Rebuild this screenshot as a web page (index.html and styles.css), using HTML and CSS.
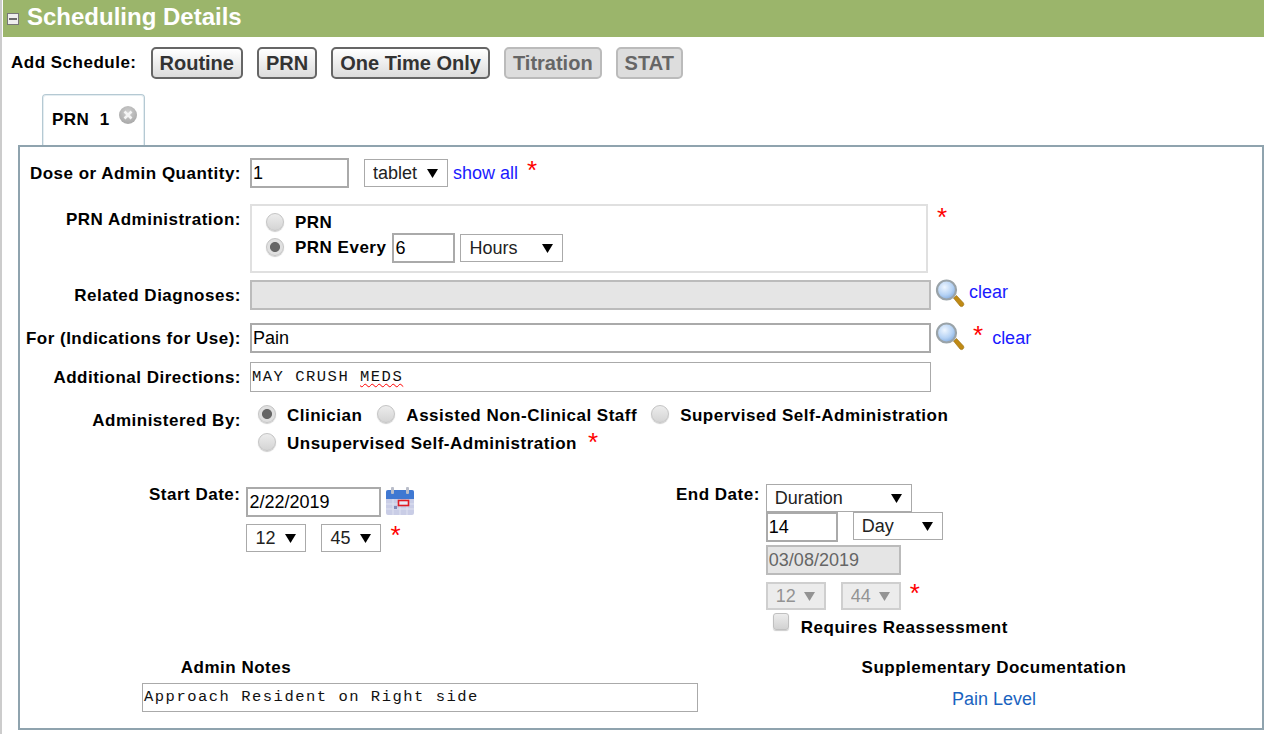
FILE: index.html
```html
<!DOCTYPE html>
<html lang="en">
<head>
<meta charset="utf-8">
<title>Scheduling Details</title>
<link rel="stylesheet" href="styles.css">
</head>
<body>
<svg class="defs" width="0" height="0" aria-hidden="true">
  <defs>
    <radialGradient id="lens" cx="40%" cy="35%" r="70%">
      <stop offset="0" stop-color="#eef6ff"/><stop offset="0.6" stop-color="#b5d2f4"/><stop offset="1" stop-color="#7fa8dc"/>
    </radialGradient>
    <radialGradient id="closeg" cx="50%" cy="35%" r="65%">
      <stop offset="0" stop-color="#d0d0d0"/><stop offset="1" stop-color="#a8a8a8"/>
    </radialGradient>
    <symbol id="mag" viewBox="0 0 30 30">
      <path d="M18.5 19 L21.5 16.5 L28.5 24 Q29.5 25.5 28 27 Q26.5 28.2 25 27 Z" fill="#c08a14" stroke="#94690c" stroke-width=".6"/>
      <circle cx="11.5" cy="11" r="9.5" fill="url(#lens)" stroke="#9aa3a8" stroke-width="2.2"/>
    </symbol>
  </defs>
</svg>
<main class="page">
  <header class="section-head">
    <span class="collapse" aria-hidden="true"></span>
    <h1>Scheduling Details</h1>
  </header>
  <div class="add-row">
    <span class="add-label">Add Schedule:</span>
    <button class="btn">Routine</button>
    <button class="btn">PRN</button>
    <button class="btn">One Time Only</button>
    <button class="btn" disabled>Titration</button>
    <button class="btn" disabled>STAT</button>
  </div>
  <div class="tabs">
    <div class="tab">
      <span class="tab-text">PRN&nbsp; 1</span>
      <svg class="tab-close" width="20" height="20" viewBox="0 0 20 20" aria-hidden="true">
        <circle cx="10" cy="10" r="9" fill="url(#closeg)"/>
        <path d="M6.5 6.5 13.5 13.5 M13.5 6.5 6.5 13.5" stroke="#f4f4f4" stroke-width="2.6"/>
      </svg>
    </div>
  </div>
  <section class="panel">
    <div class="row row-dose">
      <label class="lbl">Dose or Admin Quantity:</label>
      <input class="txt w-qty" value="1">
      <select class="sel w-tablet"><option>tablet</option></select>
      <a class="link link-showall" href="#">show all</a>
      <span class="req req-dose">*</span>
    </div>
    <div class="row row-prn">
      <label class="lbl lbl-prn">PRN Administration:</label>
      <div class="prn-box">
        <div class="prn-line"><input type="radio" name="prn" class="radio"><b class="opt">PRN</b></div>
        <div class="prn-line prn-line2"><input type="radio" name="prn" class="radio" checked><b class="opt">PRN Every</b>
          <input class="txt w-every" value="6">
          <select class="sel w-hours"><option>Hours</option></select>
        </div>
      </div>
      <span class="req req-prn">*</span>
    </div>
    <div class="row row-rel">
      <label class="lbl">Related Diagnoses:</label>
      <input class="txt w-wide is-off" disabled>
      <svg class="mag" width="30" height="30" aria-hidden="true"><use href="#mag"/></svg>
      <a class="link link-clear1" href="#">clear</a>
    </div>
    <div class="row row-for">
      <label class="lbl">For (Indications for Use):</label>
      <input class="txt w-wide" value="Pain">
      <svg class="mag" width="30" height="30" aria-hidden="true"><use href="#mag"/></svg>
      <span class="req req-for">*</span>
      <a class="link link-clear2" href="#">clear</a>
    </div>
    <div class="row row-add">
      <label class="lbl">Additional Directions:</label>
      <div class="mono w-wide2">MAY CRUSH <span class="spell">MEDS</span></div>
    </div>
    <div class="row row-by">
      <label class="lbl lbl-by">Administered By:</label>
      <div class="by-opts">
        <div class="by-line">
          <input type="radio" name="by" class="radio" checked><b class="opt o1">Clinician</b>
          <input type="radio" name="by" class="radio"><b class="opt o2">Assisted Non-Clinical Staff</b>
          <input type="radio" name="by" class="radio"><b class="opt">Supervised Self-Administration</b>
        </div>
        <div class="by-line by-line2">
          <input type="radio" name="by" class="radio"><b class="opt">Unsupervised Self-Administration</b>
          <span class="req req-by">*</span>
        </div>
      </div>
    </div>
    <div class="dates">
      <div class="date-col start-col">
        <label class="lbl lbl-date lbl-start">Start Date:</label>
        <div class="date-body start-body">
          <div class="line">
            <input class="txt w-date" value="2/22/2019">
            <svg class="cal" width="30" height="30" viewBox="0 0 30 30" aria-hidden="true">
              <rect x="1" y="4" width="28" height="25" rx="2" fill="#c9cde6"/>
              <path d="M1 13V6a2 2 0 0 1 2-2h24a2 2 0 0 1 2 2v7z" fill="#3f78d2"/>
              <rect x="6" y="1" width="3" height="7" rx="1" fill="#b9bdc9"/>
              <rect x="21" y="1" width="3" height="7" rx="1" fill="#b9bdc9"/>
              <path d="M1 18H29M1 23H29M8 13V29M15 13V29M22 13V29" stroke="#dfe2f1" stroke-width="1"/>
              <rect x="13.5" y="14.5" width="10" height="5" fill="#e8e8f5" stroke="#e01b24" stroke-width="1.6"/>
              <rect x="9" y="20" width="3" height="3" fill="#8088b8"/>
            </svg>
          </div>
          <div class="line line-time">
            <select class="sel w-time"><option>12</option></select>
            <select class="sel w-time"><option>45</option></select>
            <span class="req req-start">*</span>
          </div>
        </div>
      </div>
      <div class="date-col end-col">
        <label class="lbl lbl-date lbl-end">End Date:</label>
        <div class="date-body">
          <select class="sel w-dur"><option>Duration</option></select>
          <div class="line line-dur">
            <input class="txt w-num" value="14">
            <select class="sel w-day"><option>Day</option></select>
          </div>
          <input class="txt w-date2 is-off" value="03/08/2019" disabled>
          <div class="line line-time2">
            <select class="sel w-time is-off" disabled><option>12</option></select>
            <select class="sel w-time is-off" disabled><option>44</option></select>
            <span class="req req-end">*</span>
          </div>
          <div class="line line-reassess">
            <input type="checkbox" class="check"><b class="opt">Requires Reassessment</b>
          </div>
        </div>
      </div>
    </div>
    <div class="notes">
      <div class="notes-left">
        <b class="notes-title">Admin Notes</b>
        <div class="mono w-notes">Approach Resident on Right side</div>
      </div>
      <div class="notes-right">
        <b class="notes-title">Supplementary Documentation</b>
        <a class="pain" href="#">Pain Level</a>
      </div>
    </div>
  </section>
</main>
</body>
</html>
```
FILE: styles.css
```css
* { box-sizing: border-box; }
html, body { margin: 0; height: 100%; }
body {
  font-family: "Liberation Sans", Arial, sans-serif;
  font-size: 17px;
  color: #000;
  background: #fff;
  overflow: hidden;
}
.defs { position: absolute; }
.page { height: 734px; border-left: 2px solid #ccc; padding-left: 1px; }

.section-head {
  height: 37px;
  background: #9bb56b;
  display: flex;
  align-items: center;
  padding-left: 4px;
}
.section-head h1 {
  margin: 0 0 3px 8px;
  font-size: 24px;
  font-weight: bold;
  color: #fff;
}
.collapse {
  width: 12px; height: 12px;
  margin-top: 1px;
  border: 1px solid #777;
  background: linear-gradient(#6a6a6a, #6a6a6a) center / 8px 2px no-repeat, #eee;
}

.add-row { display: flex; align-items: center; height: 32px; margin-top: 10px; padding-left: 8px; }
.add-label { font-weight: bold; letter-spacing: .5px; margin-right: 14px; }
.btn {
  height: 32px;
  margin: 0 14px 0 0;
  padding: 0 7px;
  border: 2px solid #666;
  border-radius: 5px;
  background: linear-gradient(#fff, #dcdcdc);
  color: #333;
  font: bold 20px "Liberation Sans", Arial, sans-serif;
}
.btn:disabled { border-color: #bbb; background: #ddd; color: #666; }

.tabs { height: 66px; padding: 15px 0 0 39px; }
.tab {
  width: 103px; height: 52px;
  border: 1px solid #b5c9d3;
  border-bottom: 0;
  border-radius: 4px 4px 0 0;
  box-shadow: inset 0 0 0 1px #e4edf1;
  padding: 10px 0 0 9px;
  display: flex;
  align-items: flex-start;
}
.tab-text { font-weight: bold; letter-spacing: .5px; margin-top: 5px; }
.tab-close { margin-left: 8px; margin-top: 0; }

.panel {
  margin: 0 0 0 15px;
  height: 585px;
  border: 2px solid #8fa3ae;
  position: relative;
  padding-top: 11px;
}
.row { display: flex; align-items: center; }
.lbl { width: 221px; margin-right: 9px; margin-top: 2px; text-align: right; font-weight: bold; letter-spacing: .5px; flex: none; }

.txt {
  height: 30px;
  border: 2px solid #aaa;
  padding: 0 1px;
  font: 18px "Liberation Sans", Arial, sans-serif;
  color: #000;
  background: #fff;
  outline: none;
}
.is-off { background-color: #e5e5e5; border-color: #bbb; color: #666; }
.sel {
  appearance: none;
  -webkit-appearance: none;
  height: 28px;
  border: 1px solid #aaa;
  border-radius: 0;
  padding: 0 0 0 8px;
  font: 18px "Liberation Sans", Arial, sans-serif;
  color: #222;
  background: #fff url("data:image/svg+xml,%3Csvg xmlns='http://www.w3.org/2000/svg' width='11' height='9'%3E%3Cpath d='M0 0H11L5.5 9Z' fill='%23000'/%3E%3C/svg%3E") no-repeat right 9px center;
}
.sel.is-off {
  border: 2px solid #bbb;
  color: #666;
  background: #e5e5e5 url("data:image/svg+xml,%3Csvg xmlns='http://www.w3.org/2000/svg' width='11' height='9'%3E%3Cpath d='M0 0H11L5.5 9Z' fill='%23666'/%3E%3C/svg%3E") no-repeat right 9px center;
}
.link { color: #1a1aff; text-decoration: none; font-size: 18px; }
.req { color: #f00; font-size: 26px; line-height: 1; }
.radio {
  appearance: none;
  -webkit-appearance: none;
  width: 18px; height: 18px;
  margin: 0;
  flex: none;
  border-radius: 50%;
  border: 1px solid #c4c4c4;
  background: linear-gradient(#ececec, #d4d4d4);
  box-shadow: 0 1px 1px #ccc;
}
.radio:checked { background: radial-gradient(circle, #666 0 4.6px, #e0e0e0 5.4px); }
.check {
  appearance: none;
  -webkit-appearance: none;
  width: 16px; height: 17px;
  margin: 0;
  flex: none;
  border-radius: 3px;
  border: 1px solid #c0c0c0;
  background: linear-gradient(#ececec, #d2d2d2);
  box-shadow: 0 1px 1px #ccc;
}
.opt { font-weight: bold; letter-spacing: .5px; white-space: nowrap; }

.w-qty { width: 99px; }
.w-tablet { width: 84px; margin-left: 15px; }
.link-showall { margin-left: 5px; }
.req-dose { margin: -6px 0 0 9px; }

.row-prn { margin-top: 16px; align-items: flex-start; }
.lbl-prn { margin-top: 6px; }
.prn-box { width: 678px; height: 69px; border: 2px solid #e0e0e0; padding: 6px 0 0 14px; }
.prn-line { display: flex; align-items: center; height: 22px; }
.prn-line .radio { margin: -2px 11px 0 0; }
.prn-line2 { margin-top: 3px; }
.w-every { width: 63px; margin-left: 6px; height: 30px; }
.w-hours { width: 103px; margin-left: 5px; }
.req-prn { margin: 0 0 0 9px; }

.row-rel { margin-top: 7px; }
.w-wide { width: 681px; }
.mag { margin-left: 4px; margin-top: -3px; flex: none; }
.link-clear1 { margin: -6px 0 0 4px; }

.row-for { margin-top: 13px; }
.req-for { margin: -6px 0 0 8px; }
.link-clear2 { margin: 0 0 0 9px; }

.row-add { margin-top: 9px; }
.mono {
  height: 30px;
  border: 1px solid #aaa;
  padding: 0 1px;
  font: 15.5px/28px "Liberation Mono", "Courier New", monospace;
  letter-spacing: 1.5px;
  white-space: nowrap;
  color: #111;
}
.w-wide2 { width: 681px; }
.spell { text-decoration: underline wavy #f00 1px; text-underline-offset: 2px; }

.row-by { margin-top: 10px; align-items: flex-start; }
.lbl-by { margin-top: 9px; margin-right: 17px; }
.by-opts { margin-top: 3px; }
.by-line { display: flex; align-items: center; height: 22px; }
.by-line .radio { margin: -4px 11px 0 0; }
.o1 { margin-right: 15px; }
.o2 { margin-right: 14px; }
.by-line2 { margin-top: 6px; }
.req-by { margin: -4px 0 0 11px; }

.dates { display: flex; margin-top: 29px; }
.date-col { display: flex; align-items: flex-start; flex: none; }
.start-col { width: 656px; }
.lbl-date { width: auto; margin-right: 6px; margin-top: 1px; }
.lbl-start { margin-left: 129px; }
.start-body { margin-top: 3px; }
.line { display: flex; align-items: center; }
.w-date { width: 135px; height: 30px; }
.cal { margin-left: 4px; margin-top: -2px; }
.line-time { margin-top: 7px; }
.w-time { width: 60px; margin-right: 15px; }
.req-start { margin: -6px 0 0 -6px; }
.w-dur { width: 146px; display: block; }
.line-dur { align-items: flex-start; }
.w-num { width: 72px; }
.w-day { width: 90px; margin-left: 15px; }
.w-date2 { width: 135px; display: block; margin-top: 3px; }
.line-time2 { margin-top: 7px; }
.req-end { margin: -6px 0 0 -6px; }
.line-reassess { margin: 3px 0 0 7px; height: 26px; padding-top: 4px; }
.line-reassess .check { margin: -13px 12px 0 0; }

.notes { display: flex; margin-top: 19px; }
.notes-left { width: 556px; margin-left: 122px; display: flex; flex-direction: column; }
.notes-title { display: block; text-align: center; line-height: 20px; letter-spacing: .5px; }
.notes-left .notes-title { width: 188px; }
.w-notes { width: 556px; height: 29px; margin-top: 5px; line-height: 26px; }
.notes-right { width: 266px; margin-left: 163px; display: flex; flex-direction: column; align-items: center; }
.notes-right .notes-title { white-space: nowrap; }
.pain { color: #1a63c0; text-decoration: none; margin-top: 11px; font-size: 18px; }
```
